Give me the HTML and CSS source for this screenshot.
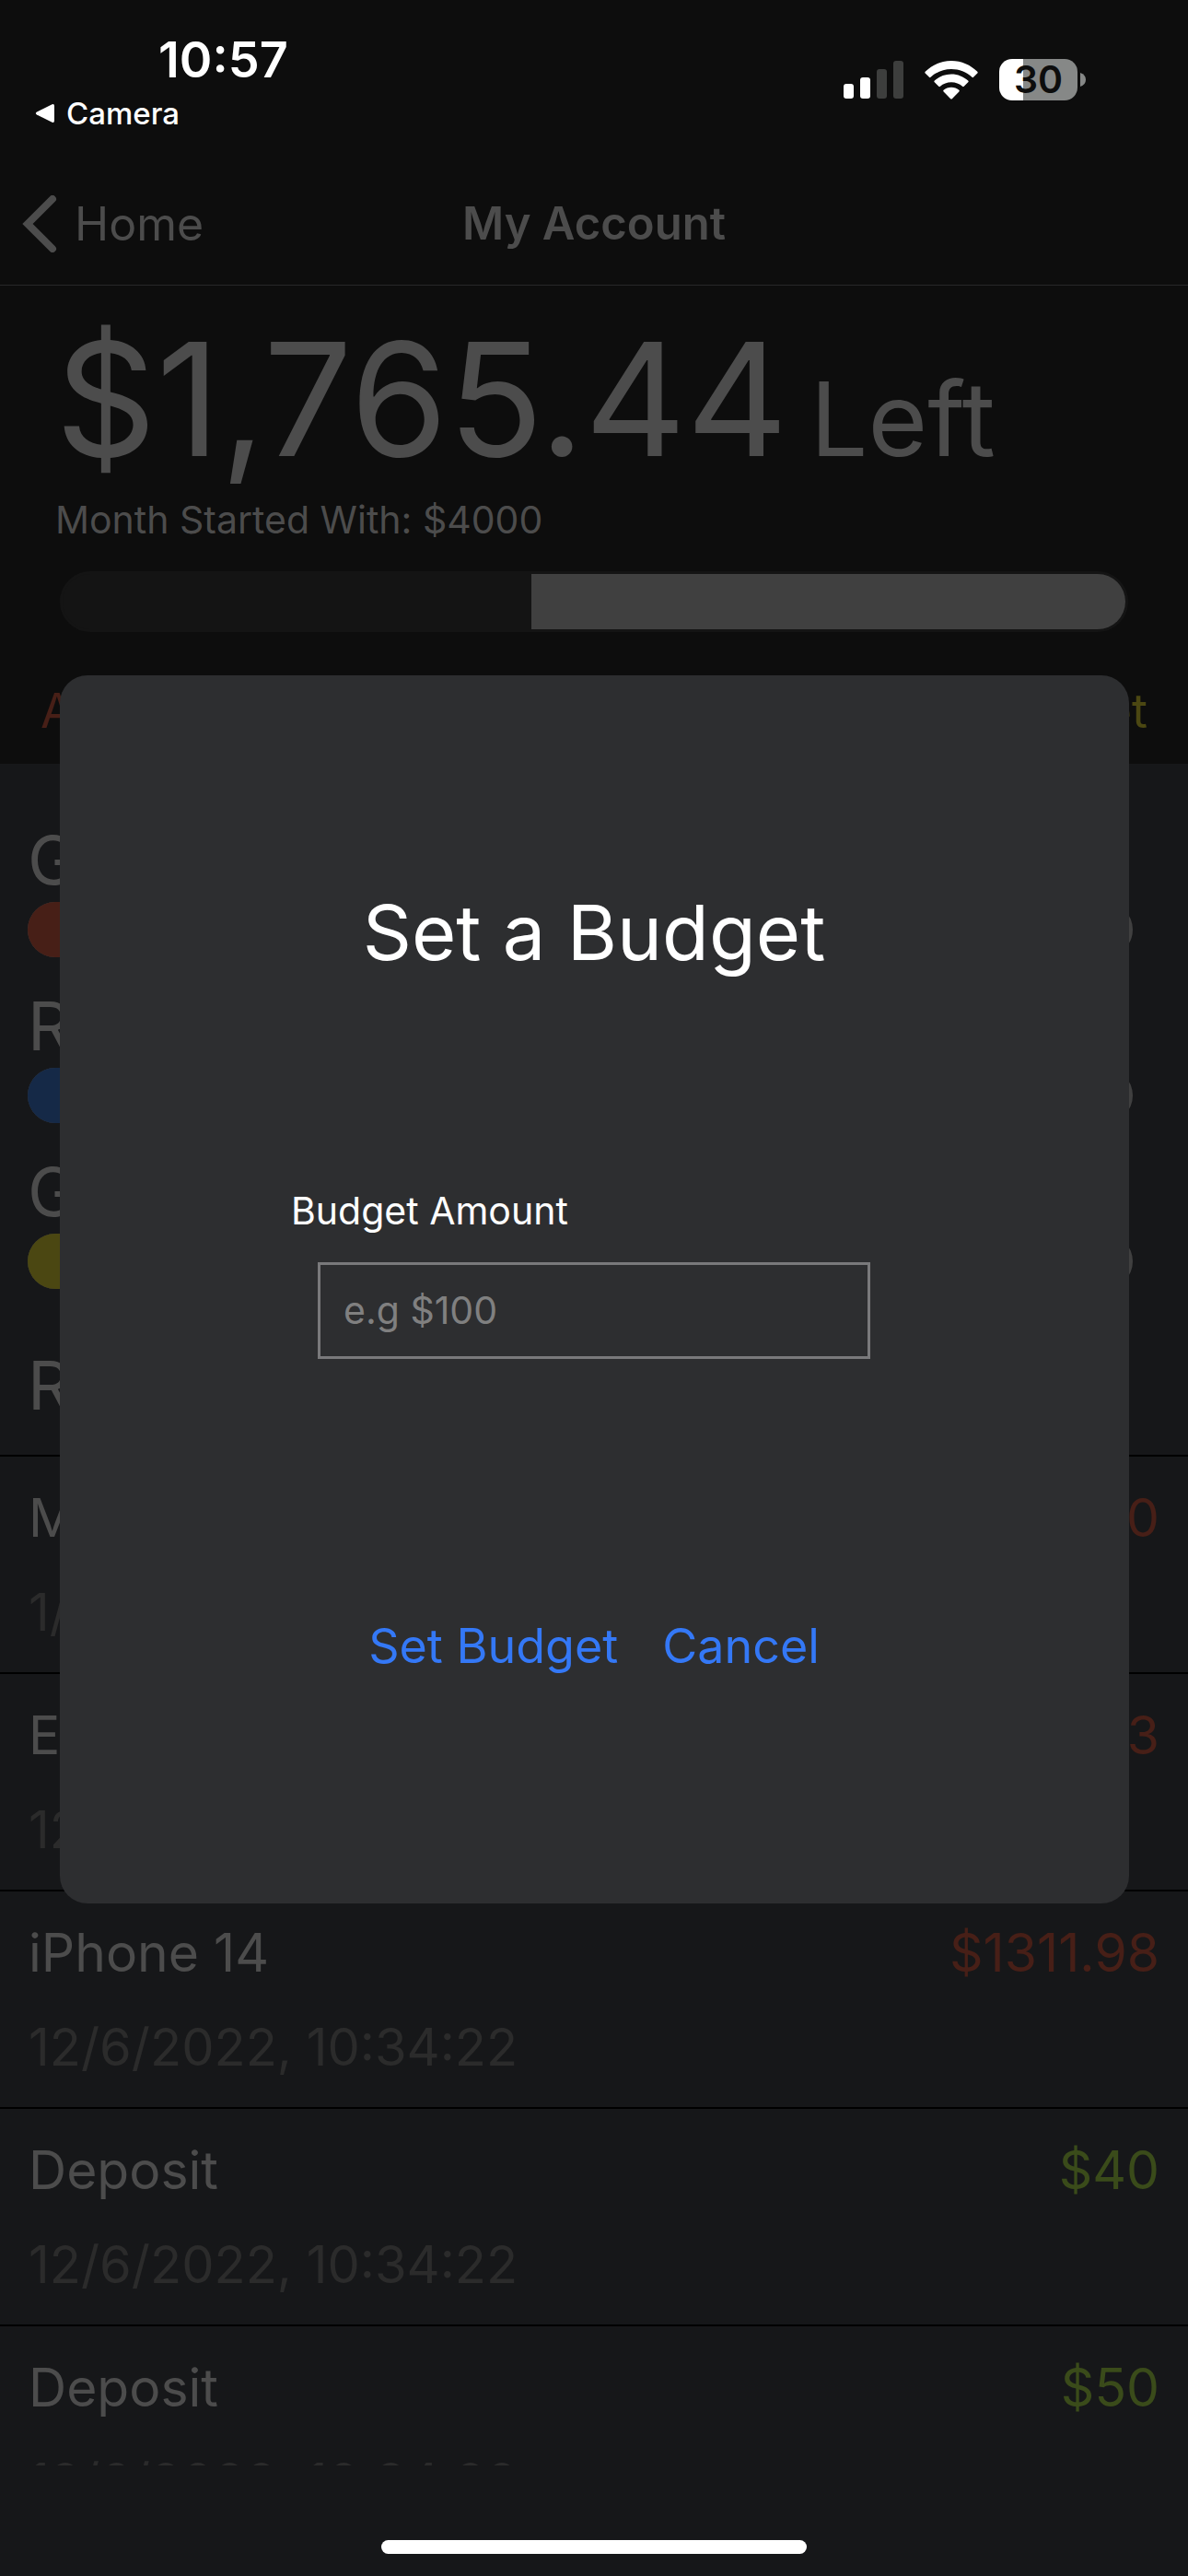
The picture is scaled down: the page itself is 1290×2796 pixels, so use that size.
FILE: index.html
```html
<!DOCTYPE html>
<html lang="en">
<head>
<meta charset="utf-8">
<meta name="viewport" content="width=device-width, initial-scale=1">
<title>My Account</title>
<link rel="stylesheet" href="styles.css">
</head>
<body>
<div class="screen">
  <header class="status">
    <div class="status-left">
      <time class="clock">10:57</time>
      <a class="back-app" href="#camera">
        <svg width="22" height="22" viewBox="0 0 22 22" aria-hidden="true"><path d="M2 9.6 18.6 1.2Q21 .4 21 3v16q0 2.600-2.400 1.800L2 12.400Q-.4 11 2 9.600Z" fill="#fff"/></svg>
        Camera
      </a>
    </div>
    <div class="status-right">
      <svg width="65" height="42" viewBox="0 0 65 42" aria-hidden="true">
        <rect x="0" y="25" width="11" height="16" rx="3" fill="#fff"/>
        <rect x="18" y="18" width="11" height="23" rx="3" fill="#fff"/>
        <rect x="36" y="9" width="11" height="32" rx="3" fill="#3d3e3d"/>
        <rect x="54" y="0" width="11" height="41" rx="3" fill="#3d3e3d"/>
      </svg>
      <svg width="58" height="42" viewBox="0 0 58 42" aria-hidden="true" fill="#fff">
        <path d="M29 0C40 0 50 4.500 57.300 11.800q.8.900 0 1.700L53 17.800q-.7.700-1.500 0C45.500 12.300 37.500 9 29 9S12.500 12.300 6.500 17.800q-.8.700-1.500 0L.7 13.500q-.8-.8 0-1.700C8 4.500 18 0 29 0Z"/>
        <path d="M29 14.500c7 0 13.400 2.700 18.200 7.100q.9.900 0 1.700L42.700 27.800q-.8.700-1.600 0C37.800 25 33.600 23.300 29 23.300S20.200 25 16.900 27.800q-.8.700-1.600 0L10.800 23.300q-.9-.8 0-1.700C15.600 17.200 22 14.500 29 14.500Z"/>
        <path d="M29 28.700c3.200 0 6.100 1.100 8.400 3q.9.800 0 1.700L29.800 41.200q-.8.700-1.600 0L20.600 33.400q-.9-.9 0-1.700c2.300-1.900 5.200-3 8.400-3Z"/>
      </svg>
      <div class="battery">
        <span class="battery-body">30</span>
        <svg width="6" height="15" viewBox="0 0 6 15" aria-hidden="true"><path d="M0 0q6 2 6 7.500T0 15Z" fill="#868887"/></svg>
      </div>
    </div>
  </header>

  <nav class="nav">
    <a class="nav-back" href="#home">
      <svg width="38" height="62" viewBox="0 0 38 62" aria-hidden="true"><path d="M33 4 6 31 33 58" fill="none" stroke="#4c4c4c" stroke-width="8" stroke-linecap="round" stroke-linejoin="miter"/></svg>
      Home
    </a>
    <h1 class="nav-title">My Account</h1>
  </nav>

  <section class="summary">
    <p class="balance"><span>$1,765.44</span> <span class="balance-note">Left</span></p>
    <p class="started">Month Started With: $4000</p>
    <div class="month-bar"><div class="month-left" style="width:55.864%"></div></div>
    <div class="actions">
      <button class="action action-add" type="button">Add</button>
      <button class="action action-budget" type="button">Set Budget</button>
    </div>
  </section>

  <main class="content">
    <section class="budgets">
      <div class="budget"><h2 class="heading">Groceries</h2><div class="meter"><div class="meter-fill red" style="width:40%"></div></div></div>
      <div class="budget"><h2 class="heading">Rent</h2><div class="meter"><div class="meter-fill blue" style="width:50%"></div></div></div>
      <div class="budget"><h2 class="heading">Gas</h2><div class="meter"><div class="meter-fill yellow" style="width:30%"></div></div></div>
    </section>
    <h2 class="heading recent">Recent</h2>
    <ul class="rows">
      <li class="row"><div class="line"><span>Market</span><span class="out">$10</span></div><time class="date">1/6/2023</time></li>
      <li class="row"><div class="line"><span>Eggs</span><span class="out">$3</span></div><time class="date">12/6/2022</time></li>
      <li class="row"><div class="line"><span>iPhone 14</span><span class="out">$1311.98</span></div><time class="date">12/6/2022, 10:34:22</time></li>
      <li class="row"><div class="line"><span>Deposit</span><span class="in">$40</span></div><time class="date">12/6/2022, 10:34:22</time></li>
      <li class="row"><div class="line"><span>Deposit</span><span class="in">$50</span></div><time class="date">12/6/2022, 10:34:22</time></li>
    </ul>
  </main>
  <footer class="home-area"><div class="home-indicator"></div></footer>
</div>

<div class="overlay">
  <form class="modal" role="dialog" aria-modal="true" aria-labelledby="modal-title">
    <h2 class="modal-title" id="modal-title">Set a Budget</h2>
    <div class="field">
      <label class="field-label" for="amount">Budget Amount</label>
      <input class="field-input" id="amount" type="text" inputmode="decimal" placeholder="e.g $100">
    </div>
    <div class="modal-actions">
      <button class="modal-button" type="button">Set Budget</button>
      <button class="modal-button" type="button">Cancel</button>
    </div>
  </form>
</div>
</body>
</html>
```
FILE: styles.css
```css
* { box-sizing: border-box; margin: 0; padding: 0; }

body {
  background: #161719;
  color: #4c4c4c;
  font-family: Inter, "Liberation Sans", sans-serif;
}

button, input { font: inherit; background: none; border: 0; }
a { color: inherit; text-decoration: none; }
svg { display: block; }

.screen {
  display: flex;
  flex-direction: column;
  height: 100vh;
  overflow: hidden;
}

/* Status bar */
.status {
  display: flex;
  justify-content: space-between;
  padding: 33px 111px 34px 38px;
  background: #0d0d0d;
  color: #fff;
}
.status-left { display: flex; flex-direction: column; gap: 6px; }
.clock { padding-left: 134px; font-size: 54px; line-height: 64px; font-weight: 600; }
.back-app {
  display: flex;
  align-items: center;
  gap: 12px;
  font-size: 33px;
  line-height: 40px;
  font-weight: 500;
}
.status-right {
  display: flex;
  align-items: center;
  gap: 23px;
  height: 45px;
  margin-top: 31px;
}
.battery { display: flex; align-items: center; gap: 3px; }
.battery-body {
  width: 85px;
  border-radius: 14px;
  background: linear-gradient(90deg, #fff 26px, #868887 26px);
  color: #0d0d0d;
  font-size: 41px;
  line-height: 45px;
  font-weight: 600;
  text-align: center;
}

/* Navigation */
.nav {
  display: grid;
  grid-template-columns: 1fr auto 1fr;
  align-items: center;
  padding: 0 24px;
  border-bottom: 1px solid #272729;
  background: #0d0d0d;
  font-size: 50px;
  line-height: 132px;
}
.nav-back { display: flex; align-items: center; gap: 19px; }
.nav-title { font-size: 49px; font-weight: 600; }

/* Month summary */
.summary { padding: 23px 60px 25px; background: #0d0d0d; }
.balance {
  display: flex;
  align-items: baseline;
  gap: 24px;
  height: 200px;
  font-size: 171px;
  line-height: 200px;
  white-space: nowrap;
}
.balance-note { font-size: 111px; }
.started { margin: 5px 0 30px; font-size: 41px; line-height: 52px; }
.month-bar {
  display: flex;
  justify-content: flex-end;
  height: 66px;
  margin: 0 5px;
  border: 3px solid #141414;
  border-radius: 33px;
  background: #141414;
  overflow: hidden;
}
.month-left { background: #404040; }
.actions {
  display: flex;
  justify-content: space-between;
  margin: 54px -16px 0;
}
.action { font-size: 52px; line-height: 64px; }
.action-add { color: #471f17; }
.action-budget { color: #4b4712; }

/* Budgets and transactions */
.content { flex: 1; min-height: 0; overflow: hidden; }
.budgets {
  display: flex;
  flex-direction: column;
  gap: 30px;
  padding: 60px 60px 60px 30px;
}
.heading { font-size: 73px; line-height: 90px; font-weight: 400; }
.meter { height: 60px; border-radius: 30px; background: #404040; overflow: hidden; }
.meter-fill { height: 100%; }
.red { background: #471f17; }
.blue { background: #152947; }
.yellow { background: #4b4712; }
.recent { padding: 0 30px 30px; }
.rows { list-style: none; }
.row {
  display: flex;
  flex-direction: column;
  gap: 30px;
  padding: 31px 31px 29px;
  border-top: 2px solid #000;
  font-size: 57px;
  line-height: 72px;
}
.line { display: flex; justify-content: space-between; }
.out { color: #471f17; }
.in { color: #3a4b1a; }
.date { color: #2b2b2b; font-size: 56px; }

.home-area { padding: 81px 0 24px; }
.home-indicator {
  width: 462px;
  height: 15px;
  margin: 0 auto;
  border-radius: 8px;
  background: #fff;
}

/* Budget dialog */
.overlay {
  position: fixed;
  inset: 0;
  display: grid;
  place-items: center;
  padding-top: 2px;
}
.modal {
  display: flex;
  flex-direction: column;
  align-items: center;
  width: 90%;
  padding: 225px 30px 247px;
  border-radius: 30px;
  background: #2d2e30;
  color: #fff;
}
.modal-title { font-size: 83px; line-height: 108px; font-weight: 400; }
.field {
  display: grid;
  gap: 30px;
  width: 658px;
  max-width: 100%;
  margin: 222px 0 280px;
}
.field-label { font-size: 41px; line-height: 52px; }
.field-input {
  justify-self: center;
  width: 600px;
  max-width: 100%;
  height: 105px;
  padding: 0 25px;
  border: 3px solid #79797b;
  color: #fff;
  font-size: 41px;
}
.field-input::placeholder { color: #808080; opacity: 1; }
.modal-actions { display: flex; gap: 48px; }
.modal-button { color: #3478f6; font-size: 52px; line-height: 64px; }
```
